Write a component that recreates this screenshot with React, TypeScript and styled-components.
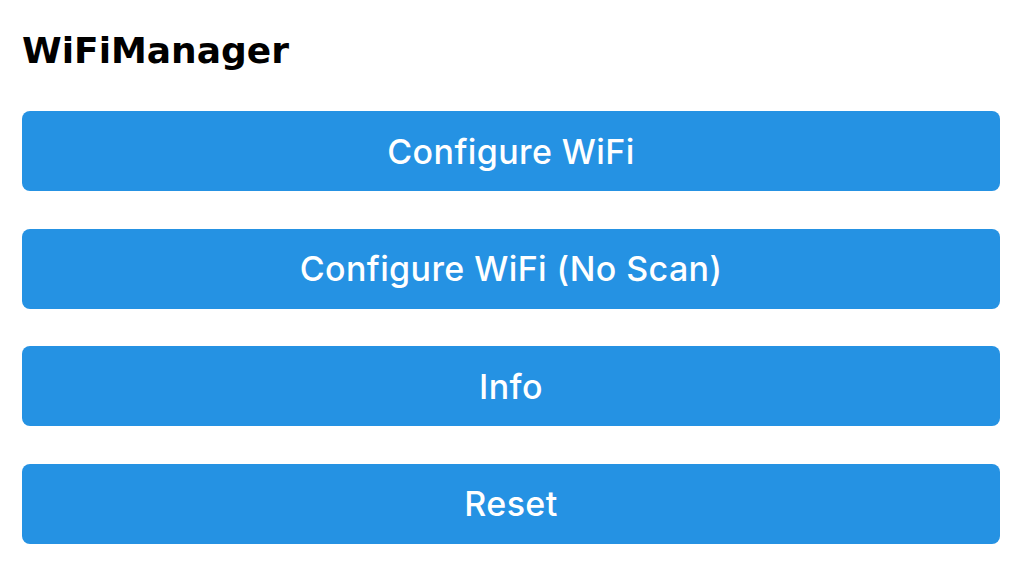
import React from "react";
import styled, { createGlobalStyle } from "styled-components";

const Global = createGlobalStyle`
  html, body { margin: 0; padding: 0; background: #ffffff; }
`;

const Page = styled.div`
  display: flex;
  flex-direction: column;
  padding: 24px 24px 0 22px;
`;

const Title = styled.h1`
  margin: 0 0 33px 0;
  font-family: "DejaVu Sans", Verdana, sans-serif;
  font-weight: bold;
  font-size: 36px;
  line-height: 54px;
  color: #000000;
`;

const ButtonList = styled.div`
  display: flex;
  flex-direction: column;
  gap: 37.5px;
`;

const Button = styled.button`
  display: flex;
  align-items: center;
  justify-content: center;
  height: 80px;
  width: 100%;
  border: 0;
  border-radius: 8px;
  background: #2592e3;
  color: #ffffff;
  font-family: Inter, "Liberation Sans", Arial, sans-serif;
  font-weight: 500;
  font-size: 34px;
  letter-spacing: 0.4px;
  padding: 0;
`;

const items = ["Configure WiFi", "Configure WiFi (No Scan)", "Info", "Reset"];

export default function App() {
  return (
    <>
      <Global />
      <Page>
        <Title>WiFiManager</Title>
        <ButtonList>
          {items.map((t) => (
            <Button key={t}>{t}</Button>
          ))}
        </ButtonList>
      </Page>
    </>
  );
}
